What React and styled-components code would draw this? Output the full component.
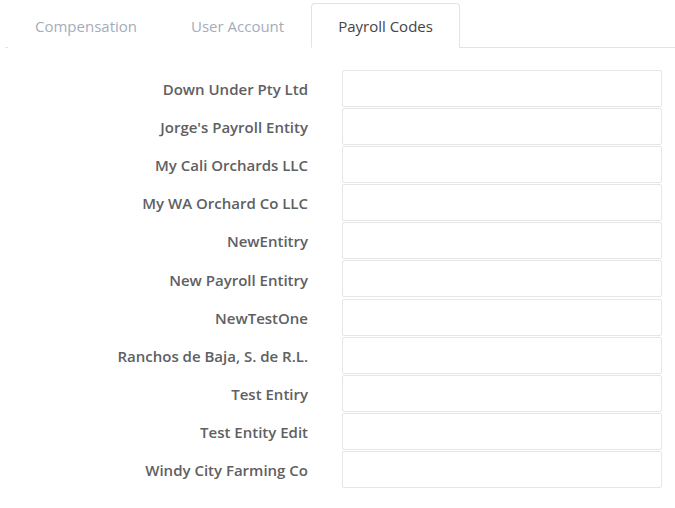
import React from "react";
import styled, { createGlobalStyle } from "styled-components";

const GlobalStyle = createGlobalStyle`
  body {
    margin: 0;
    background: #fff;
    font-family: "Open Sans", "Noto Sans", sans-serif;
  }
`;

const Page = styled.div`
  width: 675px;
  padding-top: 3px;
`;

const TabBar = styled.div`
  display: flex;
  margin-left: 5px;
  border-bottom: 1px solid #e3e3e3;
`;

const Tab = styled.div`
  height: 43px;
  padding: 0 26px;
  display: flex;
  align-items: center;
  font-size: 15px;
  color: ${(p) => (p.$active ? "#444" : "#a3adbb")};
  border: 1px solid ${(p) => (p.$active ? "#e3e3e3" : "transparent")};
  border-bottom-color: ${(p) => (p.$active ? "#fff" : "transparent")};
  border-radius: 4px 4px 0 0;
  margin-bottom: -1px;
  background: #fff;

  &:first-child {
    margin-left: 3px;
  }
`;

const Form = styled.div`
  display: grid;
  grid-template-columns: 308px 320px;
  grid-auto-rows: 38.1px;
  column-gap: 34px;
  padding-top: 22px;
`;

const Label = styled.label`
  display: flex;
  align-items: center;
  justify-content: flex-end;
  font-size: 15px;
  font-weight: 600;
  color: #5e6063;
`;

const Input = styled.input`
  box-sizing: border-box;
  height: 37px;
  width: 100%;
  border: 1px solid #e6e6e6;
  border-radius: 2px;
  outline: none;
  font-family: inherit;
  font-size: 14px;
  padding: 0 10px;
`;

const tabs = ["Compensation", "User Account", "Payroll Codes"];

const entities = [
  "Down Under Pty Ltd",
  "Jorge's Payroll Entity",
  "My Cali Orchards LLC",
  "My WA Orchard Co LLC",
  "NewEntitry",
  "New Payroll Entitry",
  "NewTestOne",
  "Ranchos de Baja, S. de R.L.",
  "Test Entiry",
  "Test Entity Edit",
  "Windy City Farming Co",
];

export default function App() {
  return (
    <Page>
      <GlobalStyle />
      <TabBar>
        {tabs.map((t) => (
          <Tab key={t} $active={t === "Payroll Codes"}>
            {t}
          </Tab>
        ))}
      </TabBar>
      <Form>
        {entities.map((e) => (
          <React.Fragment key={e}>
            <Label>{e}</Label>
            <Input type="text" />
          </React.Fragment>
        ))}
      </Form>
    </Page>
  );
}
